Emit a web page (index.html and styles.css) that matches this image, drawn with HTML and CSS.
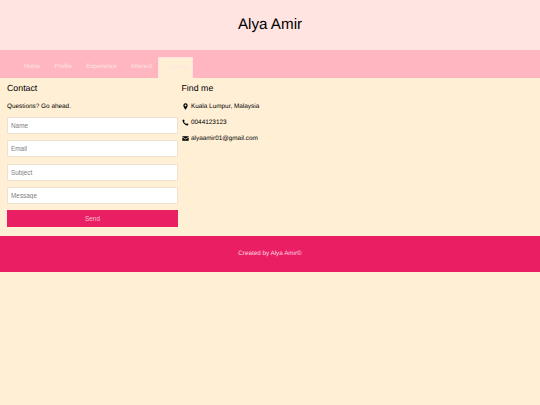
FILE: index.html
```html
<!DOCTYPE html>
<html lang="en">
<head>
  <meta charset="UTF-8">
  <title>Alya Amir</title>
  <link rel="stylesheet" href="styles.css">
</head>
<body>
  <header class="site-header">
    <h1>Alya Amir</h1>
  </header>

  <nav class="tabs">
    <a href="#">Home</a>
    <a href="#">Profile</a>
    <a href="#">Experience</a>
    <a href="#">Interest</a>
    <a href="#" class="active">Contact</a>
  </nav>

  <section class="contact">
    <div class="contact-form">
      <h2>Contact</h2>
      <p class="intro">Questions? Go ahead.</p>
      <form>
        <input type="text" placeholder="Name">
        <input type="text" placeholder="Email">
        <input type="text" placeholder="Subject">
        <input type="text" placeholder="Message">
        <button type="button">Send</button>
      </form>
    </div>
    <div class="find-me">
      <h2>Find me</h2>
      <p>
        <svg viewBox="0 0 12 12" aria-hidden="true"><path fill-rule="evenodd" d="M6 .5a3.700 3.700 0 0 0-3.700 3.700C2.300 7 6 11.500 6 11.500S9.700 7 9.700 4.200A3.700 3.700 0 0 0 6 .5zm0 2.200a1.500 1.500 0 1 1 0 3 1.500 1.500 0 0 1 0-3z"/></svg>
        Kuala Lumpur, Malaysia
      </p>
      <p>
        <svg viewBox="0 0 12 12" aria-hidden="true"><path d="M3.300 1 1.300 1.800C.9 2 .8 2.500.9 3c.7 4 4.100 7.400 8.100 8.100.5.100 1-.1 1.200-.5l.8-2-2.600-1.300-1.200 1.300C5.700 7.900 4.100 6.300 3.400 4.800l1.200-1.200z"/></svg>
        0044123123
      </p>
      <p>
        <svg viewBox="0 0 12 12" aria-hidden="true"><path d="M1 2h10c.3 0 .5.2.5.5v.6L6 6.300.5 3.100v-.6c0-.3.2-.5.5-.5zM.5 4.400 6 7.600l5.500-3.200v5.100c0 .3-.2.5-.5.5H1c-.3 0-.5-.2-.5-.5z"/></svg>
        alyaamir01@gmail.com
      </p>
    </div>
  </section>

  <footer class="site-footer">Created by Alya Amir©</footer>
</body>
</html>
```

FILE: styles.css
```css
body {
  margin: 0;
  background-color: #ffefd5;
  color: #000;
  font-family: "Liberation Sans", Arial, sans-serif;
  font-size: 6.4px;
  text-rendering: geometricPrecision;
}
.site-header {
  background-color: #ffe4e1;
  height: 50px;
  padding-bottom: 2px;
  box-sizing: border-box;
  display: flex;
  align-items: center;
  justify-content: center;
}
.site-header h1 {
  margin: 0;
  font-size: 15.200px;
  font-weight: normal;
}
.tabs {
  background-color: #ffb6c1;
  height: 28px;
  padding-left: 17px;
  display: flex;
  align-items: flex-end;
}
.tabs a {
  color: #ffe4e1;
  font-size: 6.200px;
  text-decoration: none;
  padding: 0 7px;
  height: 21px;
  line-height: 19px;
}
.tabs a.active {
  background-color: #ffefd5;
  border: 1px solid #ffe4e1;
  border-bottom: none;
  box-sizing: border-box;
  width: 35px;
  margin-left: -1px;
  padding: 0 0 0 9px;
}
.contact {
  display: flex;
  padding: 0 7px;
  height: 158px;
}
.contact-form {
  width: 171px;
  margin-right: 3.500px;
}
.contact h2 {
  margin: 5px 0 0;
  font-size: 8.800px;
  font-weight: normal;
  line-height: 11px;
}
.intro {
  margin: 8.500px 0 0;
  line-height: 8px;
}
.contact-form form {
  display: flex;
  flex-direction: column;
  margin-top: 6.500px;
}
.contact-form input {
  box-sizing: border-box;
  width: 100%;
  height: 17px;
  margin-bottom: 6.300px;
  padding: 0 3px;
  background-color: #fff;
  border: 1px solid #f0e0d0;
  border-radius: 1px;
  font-family: inherit;
  font-size: 6.400px;
}
.contact-form input::placeholder {
  color: #808080;
}
.contact-form button {
  height: 17px;
  background-color: #e91e63;
  color: #ffc0d0;
  border: none;
  font-family: inherit;
  font-size: 6.400px;
}
.find-me p {
  display: flex;
  align-items: center;
  gap: 2.500px;
  margin: 0 0 8px;
  line-height: 8px;
}
.find-me h2 + p {
  margin-top: 8.500px;
}
.find-me svg {
  width: 7px;
  height: 7px;
}
.site-footer {
  background-color: #e91e63;
  color: #ffd9e3;
  height: 36px;
  line-height: 36px;
  text-align: center;
  font-size: 6.300px;
}
```
